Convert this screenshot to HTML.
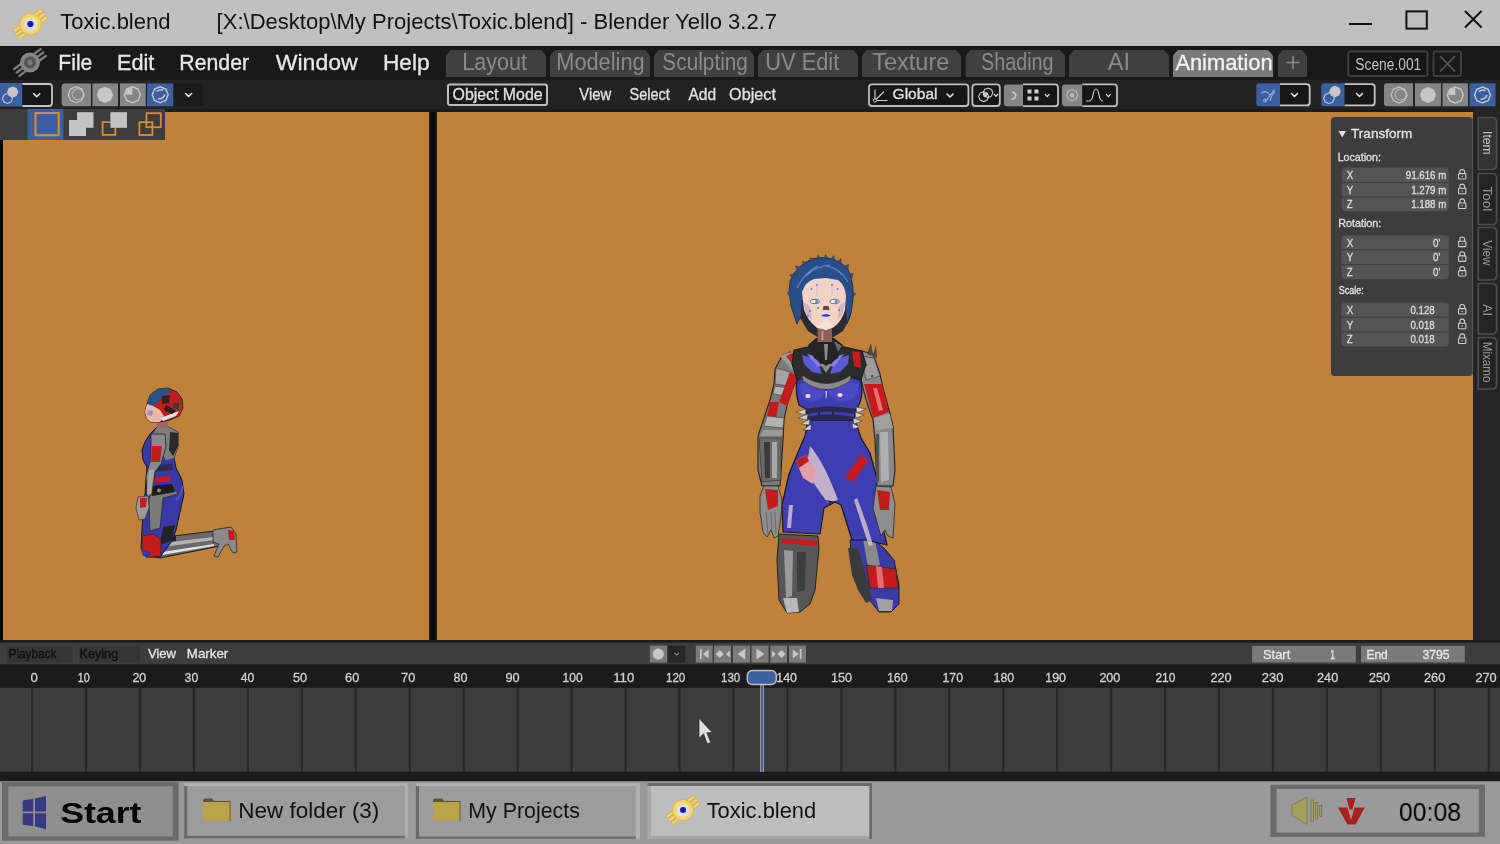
<!DOCTYPE html>
<html><head><meta charset="utf-8"><title>Toxic.blend - Blender</title>
<style>
html,body{margin:0;padding:0;width:1500px;height:844px;overflow:hidden;background:#1b1b1b;}
svg{display:block;position:absolute;left:0;top:0;will-change:transform;}
text{font-family:"Liberation Sans",sans-serif;}
</style></head><body>
<svg width="1500" height="844" viewBox="0 0 1500 844">
<defs>
 <g id="blogo">
  <g stroke="#c9a94a" stroke-width="3.4" stroke-linecap="round"><line x1="2.20" y1="-7.05" x2="10.59" y2="-13.36"/><line x1="4.79" y1="-3.61" x2="13.18" y2="-9.93"/><line x1="7.38" y1="-0.18" x2="15.77" y2="-6.50"/><line x1="-2.20" y1="7.05" x2="-10.59" y2="13.36"/><line x1="-4.79" y1="3.61" x2="-13.18" y2="9.93"/><line x1="-7.38" y1="0.18" x2="-15.77" y2="6.50"/></g>
  <g stroke="#fcd462" stroke-width="2.4" stroke-linecap="round"><line x1="2.20" y1="-7.05" x2="10.59" y2="-13.36"/><line x1="4.79" y1="-3.61" x2="13.18" y2="-9.93"/><line x1="7.38" y1="-0.18" x2="15.77" y2="-6.50"/><line x1="-2.20" y1="7.05" x2="-10.59" y2="13.36"/><line x1="-4.79" y1="3.61" x2="-13.18" y2="9.93"/><line x1="-7.38" y1="0.18" x2="-15.77" y2="6.50"/></g>
  <circle r="10.8" fill="#fcd462" stroke="#c9a94a" stroke-width="0.6"/>
  <circle r="7" fill="#dedede"/>
  <circle r="3.1" fill="#1a1ab8"/>
 </g>
 <g id="octo"><polygon points="8,0 5.66,5.66 0,8 -5.66,5.66 -8,0 -5.66,-5.66 0,-8 5.66,-5.66"/></g>
 <g id="chev"><polyline points="-3,-1.5 0,1.5 3,-1.5" fill="none" stroke="#e6e6e6" stroke-width="1.6" stroke-linecap="round" stroke-linejoin="round"/></g>
 <g id="lock"><rect x="-4.6" y="-1" width="9.2" height="6.8" rx="1" fill="none" stroke="#cfcfcf" stroke-width="1.4"/><path d="M-3,-1 V-3.2 A3,3 0 0 1 3,-3.2 V-1" fill="none" stroke="#cfcfcf" stroke-width="1.4"/><rect x="-0.8" y="1.8" width="1.6" height="1.4" fill="#cfcfcf"/></g>
</defs>

<!-- ============ TITLE BAR ============ -->
<rect x="0" y="0" width="1500" height="46" fill="#c0c0c0"/>
<use href="#blogo" x="30.4" y="24.1"/>
<rect x="1349" y="23" width="23" height="2" fill="#111"/>
<rect x="1406.4" y="11.4" width="20.4" height="17.2" fill="none" stroke="#111" stroke-width="2"/>
<path d="M1465 11 L1481.5 27.5 M1481.5 11 L1465 27.5" stroke="#111" stroke-width="2"/>

<!-- ============ MENU BAR ============ -->
<rect x="0" y="46" width="1500" height="34" fill="#191919"/>
<g transform="translate(30,62.5)">
  <g id="graylogo" stroke="#7c7c7c" stroke-width="2.4" stroke-linecap="round"><line x1="2.20" y1="-7.05" x2="10.59" y2="-13.36"/><line x1="4.79" y1="-3.61" x2="13.18" y2="-9.93"/><line x1="7.38" y1="-0.18" x2="15.77" y2="-6.50"/><line x1="-2.20" y1="7.05" x2="-10.59" y2="13.36"/><line x1="-4.79" y1="3.61" x2="-13.18" y2="9.93"/><line x1="-7.38" y1="0.18" x2="-15.77" y2="6.50"/></g>
  <circle r="10" fill="#858585"/><circle r="6" fill="#555"/><circle r="2.6" fill="#7a7a7a"/>
</g>
<!-- workspace tabs -->
<g fill="#404040">
 <path d="M446.0 77 V56.5 Q446.0 55 447.2 54 L450.0 51 Q451.0 50 452.5 50 H539.5 Q541.0 50 542.0 51 L544.8 54 Q546.0 55 546.0 56.5 V77 Z"/>
 <path d="M550.0 77 V56.5 Q550.0 55 551.2 54 L554.0 51 Q555.0 50 556.5 50 H643.5 Q645.0 50 646.0 51 L648.8 54 Q650.0 55 650.0 56.5 V77 Z"/>
 <path d="M654.0 77 V56.5 Q654.0 55 655.2 54 L658.0 51 Q659.0 50 660.5 50 H747.5 Q749.0 50 750.0 51 L752.8 54 Q754.0 55 754.0 56.5 V77 Z"/>
 <path d="M758.0 77 V56.5 Q758.0 55 759.2 54 L762.0 51 Q763.0 50 764.5 50 H851.5 Q853.0 50 854.0 51 L856.8 54 Q858.0 55 858.0 56.5 V77 Z"/>
 <path d="M862.0 77 V56.5 Q862.0 55 863.2 54 L866.0 51 Q867.0 50 868.5 50 H954.5 Q956.0 50 957.0 51 L959.8 54 Q961.0 55 961.0 56.5 V77 Z"/>
 <path d="M965.6 77 V56.5 Q965.6 55 966.8000000000001 54 L969.6 51 Q970.6 50 972.1 50 H1058.5 Q1060.0 50 1061.0 51 L1063.8 54 Q1065.0 55 1065.0 56.5 V77 Z"/>
 <path d="M1069.0 77 V56.5 Q1069.0 55 1070.2 54 L1073.0 51 Q1074.0 50 1075.5 50 H1162.5 Q1164.0 50 1165.0 51 L1167.8 54 Q1169.0 55 1169.0 56.5 V77 Z"/>
 <path d="M1278.0 77 V56.5 Q1278.0 55 1279.2 54 L1282.0 51 Q1283.0 50 1284.5 50 H1300.5 Q1302.0 50 1303.0 51 L1305.8 54 Q1307.0 55 1307.0 56.5 V77 Z"/>
</g>
<path d="M1173.0 77 V56.5 Q1173.0 55 1174.2 54 L1177.0 51 Q1178.0 50 1179.5 50 H1266.5 Q1268.0 50 1269.0 51 L1271.8 54 Q1273.0 55 1273.0 56.5 V77 Z" fill="#7a7a7a"/>
<path d="M1293 56 V69 M1286.5 62.5 H1299.5" stroke="#8a8a8a" stroke-width="1.6"/>
<rect x="1348.3" y="51.4" width="79.2" height="24.6" rx="2" fill="#161616" stroke="#3f3f3f" stroke-width="2"/>
<rect x="1433.6" y="51.4" width="27.4" height="24.6" rx="2" fill="#191919" stroke="#3f3f3f" stroke-width="2"/>
<path d="M1440 56 L1455 71.5 M1455 56 L1440 71.5" stroke="#5a5a5a" stroke-width="1.6"/>

<!-- ============ TOOLBAR ============ -->
<rect x="0" y="80" width="1500" height="29" fill="#232323"/>
<!-- overlay left -->
<rect x="0" y="83" width="22.4" height="23.5" fill="#3b5f9f"/>
<path d="M22.4 84 H49 Q52 84 52 87 V103 Q52 106 49 106 H22.4Z" fill="#171717"/><path d="M22.4 84 H49 Q52 84 52 87 V103 Q52 106 49 106 H22.4" fill="none" stroke="#c4c4c4" stroke-width="1.8"/>
<use href="#chev" x="36.7" y="95.3"/>
<g transform="translate(12.7,92) scale(0.7)" fill="#c8c8c8"><use href="#octo"/></g>
<g transform="translate(7.5,98.5) scale(0.62)" fill="none" stroke="#c0c0c0" stroke-width="1.8"><use href="#octo"/></g>
<!-- shading group left -->
<path d="M64.6 83.4 H91 V106.2 H64.6 Q61.6 106.2 61.6 103.2 V86.4 Q61.6 83.4 64.6 83.4Z" fill="#858585"/>
<rect x="92.4" y="83.4" width="25.6" height="22.8" fill="#858585"/>
<rect x="120" y="83.4" width="25.8" height="22.8" fill="#858585"/>
<rect x="147" y="83.4" width="26.2" height="22.8" fill="#3b5f9f"/>
<path d="M174.4 83.4 H200 Q203 83.4 203 86.4 V103.2 Q203 106.2 200 106.2 H174.4Z" fill="#1b1b1b"/>
<use href="#chev" x="188.6" y="95"/>
<g transform="translate(76.2,94.7)" fill="none" stroke="#c6c6c6" stroke-width="1.2"><use href="#octo"/><g transform="translate(1.6,-0.4) scale(0.72)"><use href="#octo"/></g></g>
<g transform="translate(105,94.8) scale(1.02)" fill="#c6c6c6"><use href="#octo"/></g>
<g transform="translate(132.4,94.8)"><g fill="none" stroke="#c6c6c6" stroke-width="1.4"><use href="#octo"/></g><path d="M0 0 V-7.4 L-5.2 -5.2 L-7.4 0 Z" fill="#c6c6c6"/></g>
<g transform="translate(160.2,94.8)"><g fill="none" stroke="#c6c6c6" stroke-width="1.4"><use href="#octo"/></g><path d="M-3.5 -3.5 Q0 -6 3 -4.5 M4.5 0 Q3 4.5 -2 4.2" fill="none" stroke="#c6c6c6" stroke-width="1.6"/></g>
<!-- header mode + menus -->
<rect x="448" y="84.5" width="99" height="20.5" rx="2" fill="#181818" stroke="#bdbdbd" stroke-width="2"/>
<!-- Global dropdown -->
<rect x="869" y="84.4" width="99.4" height="21.6" rx="3" fill="#161616" stroke="#bdbdbd" stroke-width="1.8"/>
<path d="M875 89.5 V100.5 H887.5 M875 100.5 L884 91.5" fill="none" stroke="#c8c8c8" stroke-width="1.2"/>
<circle cx="875" cy="100.5" r="1.6" fill="#161616" stroke="#c8c8c8" stroke-width="1"/>
<use href="#chev" x="950" y="95.5"/>
<rect x="972.4" y="84.4" width="27.4" height="21.6" rx="3" fill="#161616" stroke="#bdbdbd" stroke-width="1.8"/>
<g transform="translate(983.6,96.6) scale(0.62)" fill="none" stroke="#c8c8c8" stroke-width="1.8"><use href="#octo"/></g>
<g transform="translate(988,92.8) scale(0.6)" fill="none" stroke="#c8c8c8" stroke-width="1.8"><use href="#octo"/></g>
<circle cx="985.2" cy="94.8" r="2.4" fill="#c8c8c8"/>
<polyline points="994,94 996,96.4 998,94" fill="none" stroke="#e6e6e6" stroke-width="1.2"/>
<!-- snap -->
<path d="M1007 84.4 H1023 V106.2 H1007 Q1004 106.2 1004 103.2 V87.4 Q1004 84.4 1007 84.4Z" fill="#858585"/>
<path d="M1023 84.4 H1055 Q1058 84.4 1058 87.4 V103.2 Q1058 106.2 1055 106.2 H1023Z" fill="#161616"/><path d="M1023 84.4 H1055 Q1058 84.4 1058 87.4 V103.2 Q1058 106.2 1055 106.2 H1023" fill="none" stroke="#bdbdbd" stroke-width="1.8"/>
<path d="M1012 92 Q1017 93.5 1015.4 97 Q1014 99.5 1011.5 99" fill="none" stroke="#c8c8c8" stroke-width="1.6"/>
<g fill="#cfcfcf"><rect x="1027.5" y="89.5" width="4" height="4"/><rect x="1034.5" y="89.5" width="4" height="4"/><rect x="1027.5" y="96.5" width="4" height="4"/><rect x="1034.5" y="96.5" width="4" height="4"/></g>
<polyline points="1045,94.2 1047.2,96.6 1049.4,94.2" fill="none" stroke="#e6e6e6" stroke-width="1.2"/>
<!-- proportional -->
<path d="M1065 84.4 H1082.3 V106.2 H1065 Q1062 106.2 1062 103.2 V87.4 Q1062 84.4 1065 84.4Z" fill="#858585"/>
<path d="M1082.3 84.4 H1114 Q1117 84.4 1117 87.4 V103.2 Q1117 106.2 1114 106.2 H1082.3Z" fill="#161616"/><path d="M1082.3 84.4 H1114 Q1117 84.4 1117 87.4 V103.2 Q1117 106.2 1114 106.2 H1082.3" fill="none" stroke="#bdbdbd" stroke-width="1.8"/>
<g transform="translate(1072.2,95.2) scale(0.7)" fill="none" stroke="#bdbdbd" stroke-width="1.6"><use href="#octo"/></g>
<circle cx="1072.2" cy="95.2" r="2.2" fill="#bdbdbd"/>
<path d="M1086 101 H1089 Q1092 101 1093 95 Q1094 89 1096 89 Q1098 89 1099 95 Q1100 101 1103 101" fill="none" stroke="#c8c8c8" stroke-width="1.2"/>
<polyline points="1106.2,94.2 1108.4,96.6 1110.6,94.2" fill="none" stroke="#e6e6e6" stroke-width="1.2"/>
<!-- right toolbar: gizmo -->
<path d="M1259.3 83.3 H1280 V106.3 H1259.3 Q1256.3 106.3 1256.3 103.3 V86.3 Q1256.3 83.3 1259.3 83.3Z" fill="#3b5f9f"/>
<path d="M1280 84.2 H1306.7 Q1309.7 84.2 1309.7 87.2 V102.4 Q1309.7 105.4 1306.7 105.4 H1280Z" fill="#171717"/><path d="M1280 84.2 H1306.7 Q1309.7 84.2 1309.7 87.2 V102.4 Q1309.7 105.4 1306.7 105.4 H1280" fill="none" stroke="#c4c4c4" stroke-width="1.8"/>
<use href="#chev" x="1294.5" y="95"/>
<path d="M1261.5 93 Q1266 89.5 1270 95 M1274.4 89.5 L1268 98 Q1266.5 100.5 1265 101 M1275 91.5 Q1271 95 1270 101" fill="none" stroke="#9fb3d8" stroke-width="1.1"/>
<circle cx="1265" cy="100.5" r="1.5" fill="none" stroke="#9fb3d8" stroke-width="1"/>
<!-- overlays right -->
<path d="M1324.3 83.3 H1344.7 V106.3 H1324.3 Q1321.3 106.3 1321.3 103.3 V86.3 Q1321.3 83.3 1324.3 83.3Z" fill="#3b5f9f"/>
<path d="M1344.7 84.2 H1371.7 Q1374.7 84.2 1374.7 87.2 V102.4 Q1374.7 105.4 1371.7 105.4 H1344.7Z" fill="#171717"/><path d="M1344.7 84.2 H1371.7 Q1374.7 84.2 1374.7 87.2 V102.4 Q1374.7 105.4 1371.7 105.4 H1344.7" fill="none" stroke="#c4c4c4" stroke-width="1.8"/>
<use href="#chev" x="1359.5" y="95"/>
<g transform="translate(1335,91.5) scale(0.72)" fill="#c8c8c8"><use href="#octo"/></g>
<g transform="translate(1329,98.2) scale(0.66)" fill="none" stroke="#c0c0c0" stroke-width="1.8"><use href="#octo"/></g>
<!-- shading right -->
<path d="M1387 83.3 H1413 V106.3 H1387 Q1384 106.3 1384 103.3 V86.3 Q1384 83.3 1387 83.3Z" fill="#858585"/>
<rect x="1415" y="83.3" width="26" height="23" fill="#858585"/>
<rect x="1442.5" y="83.3" width="25.5" height="23" fill="#858585"/>
<rect x="1469.5" y="83.3" width="26" height="23" fill="#3b5f9f"/>
<g transform="translate(1399,95)" fill="none" stroke="#c6c6c6" stroke-width="1.2"><use href="#octo"/><g transform="translate(1.6,-0.4) scale(0.72)"><use href="#octo"/></g></g>
<g transform="translate(1428,95)" fill="#c6c6c6"><use href="#octo"/></g>
<g transform="translate(1455.3,95)"><g fill="none" stroke="#c6c6c6" stroke-width="1.4"><use href="#octo"/></g><path d="M0 0 V-7.4 L-5.2 -5.2 L-7.4 0 Z" fill="#c6c6c6"/></g>
<g transform="translate(1482.5,95)"><g fill="none" stroke="#c6c6c6" stroke-width="1.4"><use href="#octo"/></g><path d="M-3.5 -3.5 Q0 -6 3 -4.5 M4.5 0 Q3 4.5 -2 4.2" fill="none" stroke="#c6c6c6" stroke-width="1.6"/></g>

<!-- ============ VIEWPORTS ============ -->
<rect x="0" y="109" width="1500" height="533" fill="#1c1c1c"/>
<rect x="0" y="112" width="3" height="528" fill="#000"/>
<rect x="3" y="112" width="426.2" height="528" fill="#be823a"/>
<rect x="429" y="112" width="8" height="528" fill="#202123"/>
<rect x="430.5" y="112" width="5" height="528" fill="#000"/>
<rect x="437" y="112" width="1036" height="528" fill="#be823a"/>
<!-- select mode strip -->
<rect x="0" y="109" width="165" height="31" fill="#3d3d3d"/>
<rect x="27.5" y="109" width="36" height="31" fill="#3b5f9f"/>
<rect x="35.5" y="113" width="23.2" height="22.2" fill="#3b5f9f" stroke="#d98c36" stroke-width="2"/>
<g fill="#c4c4c4"><rect x="77" y="112.2" width="16.5" height="15.6"/><rect x="69" y="120" width="17" height="16"/></g>
<rect x="110.4" y="112.2" width="16.6" height="15.6" fill="#c4c4c4"/>
<path d="M110.4 122.2 H102.6 V134.8 H115.4 V127.8" fill="none" stroke="#d98c36" stroke-width="1.8"/>
<rect x="146.4" y="113.2" width="14.4" height="14" fill="none" stroke="#d98c36" stroke-width="1.8"/>
<rect x="139.4" y="122.2" width="13" height="12.8" fill="none" stroke="#d98c36" stroke-width="1.8"/>

<!-- ===== big figure ===== -->
<g id="bigfig" stroke-linejoin="round">
 <!-- right leg (viewer right) lower, behind -->
 <path d="M850 540 L868 536 L884 548 L894 560 L899 585 L899 604 L891 612 L879 612 L868 598 L858 583 L852 566 Z" fill="#3a3aa8" stroke="#1c1c30" stroke-width="1"/>
 <path d="M848 548 L858 548 L866 575 L872 600 L866 603 L858 590 L852 575 Z" fill="#3a3a3a"/>
 <path d="M863 538 L875 540 L880 565 L868 568 Z" fill="#8a8a8a"/>
 <path d="M866 565 L896 569 L898 588 L870 588 Z" fill="#c41c1c" stroke="#2a2a2a" stroke-width="0.8"/>
 <path d="M876 566 L882 567 L884 588 L878 588 Z" fill="#e07070"/>
 <path d="M876 598 L893 600 L892 611 L879 611 Z" fill="#a0a0a0"/>
 <!-- left boot -->
 <path d="M779 534 L818 536 L819 548 L815 590 L810 604 L800 612 L787 613 L779 600 L777 560 Z" fill="#575757" stroke="#222" stroke-width="1"/>
 <path d="M781 538 L817 541 L817 546 L781 543 Z" fill="#c41c1c"/>
 <path d="M784 550 L793 551 L792 596 L786 598 Z" fill="#9a9a9a"/>
 <path d="M797 552 L806 552 L805 590 L797 592 Z" fill="#3e3e3e"/>
 <path d="M783 598 L797 598 L799 612 L787 613 Z" fill="#b8b8b8"/>
 <!-- thighs / hips -->
 <path d="M808 420 L855 420 L861 438 L870 453 L879 486 L881 520 L887 545 L866 540 L852 540 L841 505 L835 502 L824 508 L820 534 L783 532 L782 505 L789 474 L799 450 L805 436 Z" fill="#3e3eb0" stroke="#15152a" stroke-width="1.2"/>
 <path d="M810 446 Q824 462 838 500 L828 503 Q816 488 806 470 Z" fill="#d8c4d4" opacity="0.85"/>
 <path d="M796 461 L806 455 L816 470 L813 484 L803 478 Z" fill="#e0a0a8"/>
 <path d="M796 461 L806 455 L809 461 L799 468 Z" fill="#c41c1c"/>
 <path d="M845 477 L861 455 L869 460 L853 482 Z" fill="#c41c1c"/>
 <path d="M857 498 Q866 520 873 545 L869 546 Q861 522 854 500 Z" fill="#d8c8d0" opacity="0.8"/>
 <path d="M789 505 L793 505 L791 528 L787 528 Z" fill="#d8c8d0" opacity="0.8"/>
 <path d="M826 500 L836 502 L830 504 Z" fill="#2a2a5a"/>
 <!-- left arm (viewer left) -->
 <path d="M790 352 L782 356 L775 369 L774 384 L770 400 L766 412 L762 424 L758 436 L758 470 L762 486 L780 486 L783 440 L784 420 L787 405 L793 388 L799 376 Z" fill="#7a7a7a" stroke="#222" stroke-width="1.1"/>
 <path d="M776 368 L790 372 L789 386 L775 384 Z" fill="#a4a4a4" stroke="#3a3a3a" stroke-width="0.6"/>
 <path d="M775 386 L789 388 L786 396 L773 394 Z" fill="#b0b0b0" stroke="#3a3a3a" stroke-width="0.6"/>
 <path d="M790 372 L798 376 L787 406 L779 402 Z" fill="#c41c1c"/>
 <path d="M780 356 L790 352 L799 364 L792 370 Z" fill="#9a9a9a"/>
 <path d="M786 356 L793 353 L801 366 L796 369 Z" fill="#c41c1c"/>
 <path d="M770 402 L779 402 L776 418 L767 416 Z" fill="#c41c1c"/>
 <path d="M767 416 L784 418 L783 428 L764 426 Z" fill="#b4b4b4" stroke="#3a3a3a" stroke-width="0.6"/>
 <path d="M763 430 L783 430 L782 436 L761 436 Z" fill="#9a9a9a"/>
 <path d="M759 438 L781 438 L781 480 L762 482 Z" fill="#6a6a6a" stroke="#2a2a2a" stroke-width="0.6"/>
 <path d="M764 442 L770 442 L770 478 L765 478 Z" fill="#3a3a3a"/>
 <path d="M772 442 L777 442 L777 478 L772 478 Z" fill="#a8a8a8"/>
 <!-- left hand -->
 <path d="M764 486 L778 486 L782 500 L781 516 L778 536 L774 538 L771 530 L767 537 L763 532 L760 512 L760 496 Z" fill="#8e8e8e" stroke="#2a2a2a" stroke-width="0.8"/>
 <path d="M765 489 L778 490 L778 506 L768 510 Z" fill="#c41c1c"/>
 <path d="M766 512 L768 534 M771 512 L772 532 M775 512 L776 534" stroke="#5a5a5a" stroke-width="0.7"/>
 <!-- right arm -->
 <path d="M862 351 L873 354 L880 374 L883 388 L889 410 L893 426 L895 470 L893 486 L877 486 L875 440 L873 420 L868 406 L864 392 L861 379 Z" fill="#8a8a8a" stroke="#222" stroke-width="1.1"/>
 <path d="M861 356 L874 358 L880 376 L866 380 Z" fill="#9c9c9c" stroke="#3a3a3a" stroke-width="0.6"/>
 <circle cx="866" cy="365" r="1" fill="#333"/><circle cx="872" cy="376" r="1" fill="#333"/>
 <path d="M864 384 L882 384 L889 412 L873 418 Z" fill="#c41c1c"/>
 <path d="M873 388 L877 388 L883 410 L879 411 Z" fill="#ea7070"/>
 <path d="M874 418 L890 414 L893 428 L876 430 Z" fill="#a0a0a0"/>
 <path d="M880 432 L888 432 L889 480 L881 482 Z" fill="#b0b0b0"/>
 <path d="M876 434 L879 434 L879 482 L876 482 Z" fill="#505050"/>
 <path d="M867 354 L871 343 L873 355 L876 345 L877 358 Z" fill="#4a4a4a"/>
 <!-- right hand -->
 <path d="M876 486 L891 487 L895 504 L894 520 L893 538 L888 536 L885 530 L881 536 L878 526 L873 508 Z" fill="#8e8e8e" stroke="#2a2a2a" stroke-width="0.8"/>
 <path d="M877 490 L890 492 L889 510 L880 510 Z" fill="#c41c1c"/>
 <!-- torso -->
 <path d="M797 381 Q800 377 812 377 Q822 378 826 386 Q830 378 840 377 Q858 377 861 382 Q864 396 858 407 L856 409 L854 420 L808 420 L806 409 L799 405 Q795 392 797 381 Z" fill="#3e3eb4" stroke="#181830" stroke-width="1.2"/>
 <path d="M800 384 Q812 379 824 388 Q826 398 812 402 Q800 400 800 384 Z" fill="#5050c8" opacity="0.7"/>
 <path d="M828 388 Q840 379 858 384 Q860 400 842 402 Q828 398 828 388 Z" fill="#5050c8" opacity="0.7"/>
 <ellipse cx="808" cy="396" rx="2.6" ry="2" fill="#f0d8d0"/>
 <ellipse cx="840" cy="395" rx="2.6" ry="2" fill="#f0d8d0"/>
 <path d="M825.5 391 L827 391 L826.6 398 L825.8 398 Z" fill="#e8d0d0"/>
 <path d="M806 409 Q826 404 856 409 L855 414 Q826 409 807 414 Z" fill="#2a2a48"/>
 <path d="M807 417 Q826 412 855 417 L854 420 L808 420 Z" fill="#2a2a48"/>
 <path d="M818 411 L820 411 L820 418 L818 418 Z M832 410 L834 410 L834 417 L832 417 Z" fill="#2a2a48"/>
 <g fill="#d0d0d0" stroke="#2a2a2a" stroke-width="0.5">
  <path d="M796 412 L806 409 L805 415 Z"/><path d="M798 418 L808 414 L807 420 Z"/><path d="M801 424 L810 419 L809 425 Z"/><path d="M803 430 L811 424 L811 430 Z"/>
  <path d="M866 409 L856 407 L857 413 Z"/><path d="M864 415 L855 412 L856 418 Z"/><path d="M862 421 L853 418 L854 424 Z"/><path d="M860 427 L852 423 L853 429 Z"/>
 </g>
 <!-- shoulder yoke -->
 <path d="M794 350 L812 346 L826 350 L840 346 L862 351 L866 364 L861 380 L850 376 L826 388 L802 376 L797 380 L792 364 Z" fill="#2c2c2c" stroke="#1a1a1a" stroke-width="1"/>
 <path d="M802 355 L812 358 L820 368 L822 374 L812 372 L804 364 Z" fill="#5a5ad6"/>
 <path d="M807 354 L814 356 L822 366 L818 367 Z" fill="#8080e8"/>
 <path d="M849 355 L839 358 L832 368 L830 374 L840 372 L848 364 Z" fill="#5a5ad6"/>
 <path d="M844 354 L837 356 L830 366 L834 367 Z" fill="#8080e8"/>
 <path d="M852 351 L860 352 L861 368 L854 366 Z" fill="#c41c1c"/>
 <path d="M802 375 Q826 392 851 375 L850 381 Q826 398 803 381 Z" fill="#8a8a8a" stroke="#2a2a2a" stroke-width="0.6"/>
 <path d="M820 364 L832 364 L826 373 Z" fill="#8a8a8a"/>
 <!-- neck & collar -->
 <path d="M808 345 L816 338 L834 338 L843 345 L838 358 L826 366 L814 358 Z" fill="#242424"/>
 <path d="M824 344 L828 344 L827 360 L825 360 Z" fill="#8a8a8a"/>
 <path d="M834 341 L842 346 L838 352 Z" fill="#6a6a6a"/>
 <!-- jaw shadow -->
 <path d="M796 300 L853 300 L850 318 L843 331 L832 338 L819 338 L808 331 L800 318 Z" fill="#2a2a32"/>
 <rect x="817.5" y="327" width="14.5" height="15" fill="#8c6058"/>
 <rect x="821.5" y="331" width="1.8" height="9" fill="#c09a90"/>
 <!-- hair -->
 <path d="M797 324 L791 306 L789 292 L790 281 L795 272 L801 266 L806 262 L812 259 L818 257.5 L824 257.5 L830 258.5 L836 260.5 L842 264 L848 269 L851 277 L853 287 L853 300 L851 313 L847 324 L845 300 L843 288 L838 281 L826 278 L812 280 L805 287 L802 300 L801 316 Z" fill="#2a4e8a" stroke="#1c2c4a" stroke-width="0.8"/>
 <g fill="#2f5a9c" stroke="#1c2c4a" stroke-width="0.4">
  <path d="M792.0 278.0 L789.6 274.8 L795.0 274.0 Z"/><path d="M797.0 270.0 L795.4 265.8 L801.0 267.0 Z"/><path d="M803.0 265.0 L802.6 261.0 L807.0 263.0 Z"/><path d="M810.0 261.0 L810.2 257.2 L814.0 260.0 Z"/><path d="M817.0 259.0 L817.8 255.2 L821.0 258.0 Z"/><path d="M824.0 258.0 L825.4 254.4 L828.0 258.0 Z"/><path d="M831.0 259.0 L833.6 255.6 L835.0 260.0 Z"/><path d="M838.0 261.0 L841.0 258.4 L841.0 263.0 Z"/><path d="M845.0 266.0 L848.6 264.2 L848.0 269.0 Z"/><path d="M850.0 274.0 L853.4 273.6 L852.0 278.0 Z"/><path d="M790.0 292.0 L787.0 293.0 L790.0 297.0 Z"/><path d="M853.0 292.0 L856.0 293.6 L853.0 297.0 Z"/>
 </g>
 <path d="M797 288 Q805 272 818 266 M806 276 Q816 266 830 265 M826 266 Q840 268 848 282" fill="none" stroke="#5a8cd0" stroke-width="1.1"/>
 <!-- face -->
 <path d="M802 292 Q805 282 814 279 L826 278 L838 280 Q845 285 846 296 L845 310 Q842 321 834 327 L826 330 L817 328 Q808 321 804 310 Z" fill="#f2d4c6"/>
 <path d="M803 302 L810 306 L812 320 L806 314 Z" fill="#b8a0c0" opacity="0.6"/>
 <path d="M845 302 L839 306 L838 320 L843 313 Z" fill="#b8a0c0" opacity="0.6"/>
 <path d="M826 318 L834 327 L826 330 L818 327 Z" fill="#fae6dc" opacity="0.7"/>
 <ellipse cx="814.8" cy="301.5" rx="4.6" ry="2.1" fill="#eef2fa" stroke="#4a3030" stroke-width="0.7"/>
 <ellipse cx="834.6" cy="301.5" rx="4.6" ry="2.1" fill="#eef2fa" stroke="#4a3030" stroke-width="0.7"/>
 <circle cx="816.6" cy="301.5" r="1.6" fill="#5a8ad8"/><circle cx="836.2" cy="301.5" r="1.6" fill="#5a8ad8"/>
 <path d="M823.5 306 L828.5 306 L829.5 310 L822.5 310 Z" fill="#6a4848"/>
 <path d="M821 315.5 Q826 312.5 831 315.5 Q826 318 821 315.5 Z" fill="#2244e8"/>
 <g fill="#6a6ae6"><circle cx="817" cy="285" r="1"/><circle cx="832" cy="285" r="1"/><circle cx="811.5" cy="289" r="1"/><circle cx="837.5" cy="289" r="1"/><circle cx="810" cy="311" r="1"/><circle cx="839" cy="310" r="1"/><circle cx="818" cy="308" r="1"/><circle cx="808" cy="316" r="0.9"/></g>
 <path d="M817 283 V296 M832 283 V296" stroke="#b0a0b8" stroke-width="0.5"/>
</g>

<!-- ===== small figure ===== -->
<g id="smallfig" stroke-linejoin="round">
 <!-- lower leg along ground -->
 <path d="M156 538 L215 531 L222 535 L220 546 L160 558 L150 556 Z" fill="#6a6a6a" stroke="#1e1e1e" stroke-width="1"/>
 <path d="M162 543 L214 537 L214 540 L162 547 Z" fill="#b4b4b4"/>
 <path d="M162 552 L214 544 L214 546 L162 555 Z" fill="#e0e0e0"/>
 <path d="M162 538 L176 536 L176 541 L162 543 Z" fill="#242424"/>
 <!-- foot -->
 <path d="M213 530 L231 527 L236 534 L237 552 L233 553 L228 544 L224 546 L218 557 L214 556 L219 544 L213 542 Z" fill="#8a8a8a" stroke="#2a2a2a" stroke-width="0.8"/>
 <path d="M228 530 L234 531 L235 540 L229 540 Z" fill="#c41c1c"/>
 <!-- body silhouette -->
 <path d="M157 427 L150 434 L145 442 L142 450 L143 460 L147 467 L146 480 L145 494 L143 510 L142 530 L141 548 L146 557 L160 557 L172 541 L176 530 L180 512 L184 494 L182 480 L176 468 L174 458 L178 446 L178 432 L168 427 Z" fill="#3838a6" stroke="#141428" stroke-width="1"/>
 <path d="M157 427 L168 427 L178 432 L178 446 L174 458 L166 460 L160 450 L150 440 Z" fill="#7e7e7e"/>
 <path d="M170 432 L178 433 L178 446 L173 456 L169 450 Z" fill="#2a2a2a"/>
 <path d="M150 466 L172 464 L173 470 L152 472 Z" fill="#2a2a4a"/>
 <path d="M151 478 L170 476 L171 481 L152 483 Z" fill="#c41c1c"/>
 <path d="M152 489 L172 486 L178 494 L163 498 L160 528 L150 531 L149 500 Z" fill="#7a7a7a" stroke="#222" stroke-width="0.6"/>
 <path d="M150 486 L172 484 L175 492 L152 496 Z" fill="#1c1c1c"/>
 <circle cx="159" cy="490.5" r="2" fill="#8a8a8a"/>
 <path d="M163 527 L175 525 L172 540 L160 545 Z" fill="#222"/>
 <path d="M176 500 Q182 494 183 486" fill="none" stroke="#5a5ac8" stroke-width="1.5"/>
 <!-- knee pad -->
 <path d="M142 536 L154 534 L161 540 L161 556 L150 557 L142 550 Z" fill="#c41c1c" stroke="#2a2a2a" stroke-width="0.8"/>
 <path d="M141 550 L150 552 L150 557 L143 556 Z" fill="#3838a6"/>
 <!-- arm -->
 <path d="M151 434 L165 434 L166 446 L161 464 L155 472 L152 494 L147 498 L146 476 L150 462 L151 446 Z" fill="#8a8a8a" stroke="#222" stroke-width="0.8"/>
 <path d="M152 446 L162 446 L160 462 L151 462 Z" fill="#c41c1c"/>
 <path d="M149 470 L154 470 L151 494 L147 494 Z" fill="#a8a8a8"/>
 <path d="M138 497 L148 496 L149 508 L145 519 L139 520 L136 508 Z" fill="#9a9a9a" stroke="#2a2a2a" stroke-width="0.6"/>
 <path d="M140 498 L147 498 L146 507 L140 508 Z" fill="#c41c1c"/>
 <!-- neck -->
 <path d="M157 418 L168 418 L168 428 L157 428 Z" fill="#a0665e"/>
 <!-- head -->
 <path d="M147 404 L150 395 L158 389 L168 388 L177 392 L182 399 L183 408 L179 416 L170 420 L160 422 L151 422 L147 419 L145 412 Z" fill="#c41c1c" stroke="#262626" stroke-width="0.9"/>
 <path d="M147 404 L150 395 L158 389 L168 388 L172 391 L164 396 L158 402 L153 408 Z" fill="#2a5088"/>
 <path d="M145 412 L147 404 L153 406 L160 410 L164 416 L160 422 L151 422 L147 419 Z" fill="#e8baa8"/>
 <path d="M148 410 L153 411 L152 416 L147 415 Z" fill="#9a80c0" opacity="0.8"/>
 <path d="M162 396 L170 395 L169 403 L162 404 Z" fill="#3a1a1a"/>
 <path d="M173 403 L179 403 L179 409 L173 409 Z" fill="#3a3a3a"/>
 <path d="M160 418 L179 411 L176 416 L163 421 Z" fill="#e0e0e0"/>
 <path d="M166 405 L176 411 L172 414 L164 410 Z" fill="#1e1e1e"/>
</g>


<!-- N panel -->
<path d="M1335 117 H1469 Q1473 117 1473 121 V372 Q1473 376 1469 376 H1335 Q1331 376 1331 372 V121 Q1331 117 1335 117Z" fill="#3d3d3d"/>
<path d="M1469 117.5 Q1472.5 117.5 1472.5 121 V372 Q1472.5 375.5 1469 375.5" fill="none" stroke="#575757" stroke-width="1"/>
<polygon points="1338.5,131 1346,131 1342.25,137.5" fill="#e0e0e0"/>
<g fill="#545454">
 <rect x="1341.8" y="167.6" width="107" height="43.6" rx="4"/>
 <rect x="1341.5" y="235.2" width="107.3" height="43.7" rx="4"/>
 <rect x="1341.5" y="302.6" width="107.3" height="43.9" rx="4"/>
</g>
<g fill="#3d3d3d">
 <rect x="1341.5" y="182" width="107.5" height="1"/><rect x="1341.5" y="196.6" width="107.5" height="1"/>
 <rect x="1341.5" y="249.3" width="107.5" height="1"/><rect x="1341.5" y="264" width="107.5" height="1"/>
 <rect x="1341.5" y="316.7" width="107.5" height="1"/><rect x="1341.5" y="331.5" width="107.5" height="1"/>
</g>
<g>
 <use href="#lock" transform="translate(1462.2,174.4) scale(0.8)"/><use href="#lock" transform="translate(1462.2,189.1) scale(0.8)"/><use href="#lock" transform="translate(1462.2,203.8) scale(0.8)"/>
 <use href="#lock" transform="translate(1462.2,242.0) scale(0.8)"/><use href="#lock" transform="translate(1462.2,256.7) scale(0.8)"/><use href="#lock" transform="translate(1462.2,271.4) scale(0.8)"/>
 <use href="#lock" transform="translate(1462.2,309.4) scale(0.8)"/><use href="#lock" transform="translate(1462.2,324.09999999999997) scale(0.8)"/><use href="#lock" transform="translate(1462.2,338.79999999999995) scale(0.8)"/>
</g>
<!-- right tab strip -->
<rect x="1473" y="109" width="27" height="533" fill="#252525"/>
<g fill="#242424" stroke="#4e4e4e" stroke-width="1.6">
 <path d="M1478.3 117.5 H1492 Q1496.5 117.5 1496.5 122 V165 Q1496.5 169.5 1492 169.5 H1478.3Z" fill="#333"/>
 <path d="M1478.3 173.5 H1492 Q1496.5 173.5 1496.5 178 V220 Q1496.5 224.5 1492 224.5 H1478.3Z"/>
 <path d="M1478.3 227.5 H1492 Q1496.5 227.5 1496.5 232 V275.5 Q1496.5 280 1492 280 H1478.3Z"/>
 <path d="M1478.3 283.5 H1492 Q1496.5 283.5 1496.5 288 V329.5 Q1496.5 334 1492 334 H1478.3Z"/>
 <path d="M1478.3 337.5 H1492 Q1496.5 337.5 1496.5 342 V384.5 Q1496.5 389 1492 389 H1478.3Z"/>
</g>

<!-- ============ TIMELINE ============ -->
<rect x="0" y="640" width="1500" height="2.6" fill="#1c1c1c"/>
<rect x="0" y="642.6" width="1500" height="22" fill="#3d3d3d"/>
<rect x="6.5" y="646" width="66" height="16.5" fill="#363636"/>
<rect x="79" y="646" width="61" height="16.5" fill="#363636"/>
<rect x="649.8" y="645.6" width="17.2" height="17" fill="#7a7a7a"/>
<circle cx="658.3" cy="654.1" r="5.6" fill="#c8c8c8"/>
<rect x="668.2" y="645.6" width="17.1" height="17" fill="#272727"/>
<polyline points="674.5,653 676.7,655.2 678.9,653" fill="none" stroke="#b8b8b8" stroke-width="1"/>
<g fill="#7a7a7a">
 <rect x="695.8" y="645.6" width="16.8" height="17"/><rect x="714" y="645.6" width="17" height="17"/>
 <rect x="733" y="645.6" width="17" height="17"/><rect x="751.5" y="645.6" width="17" height="17"/>
 <rect x="770.4" y="645.6" width="16.6" height="17"/><rect x="789" y="645.6" width="17" height="17"/>
</g>
<g fill="#c8c8c8">
 <rect x="700" y="649" width="1.6" height="10"/><polygon points="708.6,649.4 708.6,658.6 702.8,654"/>
 <polygon points="715.6,654 719.8,650 724,654 719.8,658"/><polygon points="729.8,650.5 729.8,657.5 725.8,654"/>
 <polygon points="745.2,648.5 745.2,659.5 737.5,654"/>
 <polygon points="756.5,648.5 756.5,659.5 764.2,654"/>
 <polygon points="771.8,650.5 771.8,657.5 775.8,654"/><polygon points="777.4,654 781.6,650 785.8,654 781.6,658"/>
 <polygon points="792.8,649.4 792.8,658.6 798.6,654"/><rect x="799.8" y="649" width="1.6" height="10"/>
</g>
<rect x="1252.1" y="645.8" width="103.7" height="16.7" fill="#7a7a7a"/>
<rect x="1361" y="645.8" width="103.8" height="16.7" fill="#7a7a7a"/>
<!-- ruler + body -->
<rect x="0" y="664.6" width="1500" height="23.2" fill="#1b1b1b"/>
<rect x="0" y="687.8" width="1500" height="84" fill="#3d3d3d"/>
<g fill="#282828" id="tlines"><rect x="31.00" y="687.8" width="2.2" height="84"/><rect x="84.95" y="687.8" width="2.2" height="84"/><rect x="138.90" y="687.8" width="2.2" height="84"/><rect x="192.85" y="687.8" width="2.2" height="84"/><rect x="246.80" y="687.8" width="2.2" height="84"/><rect x="300.75" y="687.8" width="2.2" height="84"/><rect x="354.70" y="687.8" width="2.2" height="84"/><rect x="408.65" y="687.8" width="2.2" height="84"/><rect x="462.60" y="687.8" width="2.2" height="84"/><rect x="516.55" y="687.8" width="2.2" height="84"/><rect x="570.50" y="687.8" width="2.2" height="84"/><rect x="624.45" y="687.8" width="2.2" height="84"/><rect x="678.40" y="687.8" width="2.2" height="84"/><rect x="732.35" y="687.8" width="2.2" height="84"/><rect x="786.30" y="687.8" width="2.2" height="84"/><rect x="840.25" y="687.8" width="2.2" height="84"/><rect x="894.20" y="687.8" width="2.2" height="84"/><rect x="948.15" y="687.8" width="2.2" height="84"/><rect x="1002.10" y="687.8" width="2.2" height="84"/><rect x="1056.05" y="687.8" width="2.2" height="84"/><rect x="1110.00" y="687.8" width="2.2" height="84"/><rect x="1163.95" y="687.8" width="2.2" height="84"/><rect x="1217.90" y="687.8" width="2.2" height="84"/><rect x="1271.85" y="687.8" width="2.2" height="84"/><rect x="1325.80" y="687.8" width="2.2" height="84"/><rect x="1379.75" y="687.8" width="2.2" height="84"/><rect x="1433.70" y="687.8" width="2.2" height="84"/><rect x="1487.65" y="687.8" width="2.2" height="84"/></g>
<rect x="0" y="771.8" width="1500" height="9.4" fill="#1b1b1b"/>
<!-- playhead -->
<rect x="760.3" y="683" width="3.6" height="89" fill="#bdbdbd"/>
<rect x="761" y="683" width="2.2" height="89" fill="#3b5f9f"/>
<rect x="747.3" y="670.5" width="29" height="14" rx="5" fill="#3b5f9f" stroke="#bdbdbd" stroke-width="1.5"/>
<!-- mouse cursor -->
<path d="M699 718.3 L699 738.4 L703.5 733.8 L707.3 743.8 L710.8 742.4 L706.8 732.8 L712.2 732.6 Z" fill="#dedede" stroke="#2a2a2a" stroke-width="0.7" stroke-linejoin="round"/>

<!-- ============ TASKBAR ============ -->
<rect x="0" y="781.2" width="1500" height="62.8" fill="#9a9a9a"/>
<rect x="2" y="782" width="176.7" height="58.7" fill="#6b6b6b"/>
<rect x="8.3" y="786.3" width="164.4" height="50.1" fill="#8f8f8f"/>
<g fill="#383884">
 <polygon points="22.7,800.5 33.2,798.8 33.2,811.5 22.7,811.5"/>
 <polygon points="35,798.5 46,796 46,811.5 35,811.5"/>
 <polygon points="22.7,813.2 33.2,813.2 33.2,826.2 22.7,824.6"/>
 <polygon points="35,813.2 46,813.2 46,829.3 35,826.5"/>
</g>
<!-- button 2 -->
<rect x="184.2" y="783" width="224" height="55.3" fill="#b0b0b0"/>
<rect x="184.2" y="786" width="3.3" height="52.3" fill="#6a6a6a"/>
<rect x="184.2" y="835.5" width="221" height="2.8" fill="#6a6a6a"/>
<rect x="187.5" y="786" width="217.5" height="49.5" fill="#9c9c9c"/>
<!-- button 3 -->
<rect x="415.8" y="783" width="224.2" height="55.8" fill="#b0b0b0"/>
<rect x="415.8" y="786" width="3.4" height="52.8" fill="#6a6a6a"/>
<rect x="415.8" y="836.3" width="220" height="2.5" fill="#6a6a6a"/>
<rect x="419.2" y="786" width="216.6" height="50.3" fill="#9c9c9c"/>
<!-- button 4 (active) -->
<rect x="647.5" y="783" width="224.5" height="56" fill="#a8a8a8"/>
<rect x="647.5" y="783" width="224.5" height="3" fill="#6a6a6a"/>
<rect x="869.2" y="783" width="2.8" height="56" fill="#6a6a6a"/>
<rect x="651" y="786" width="218.2" height="50" fill="#bdbdbd"/>
<!-- folder icons -->
<g transform="translate(203,798)">
 <path d="M0 3 Q0 0.5 2.5 0.5 H9 L11 3 H27.8 V23 H0Z" fill="#5e5230"/>
 <rect x="0" y="4" width="27.8" height="19" fill="#b8a24a"/>
 <rect x="26.2" y="4" width="1.6" height="19" fill="#8a7838"/>
</g>
<g transform="translate(433,798)">
 <path d="M0 3 Q0 0.5 2.5 0.5 H9 L11 3 H27.8 V23 H0Z" fill="#5e5230"/>
 <rect x="0" y="4" width="27.8" height="19" fill="#b8a24a"/>
 <rect x="26.2" y="4" width="1.6" height="19" fill="#8a7838"/>
</g>
<use href="#blogo" transform="translate(683,810.1) scale(0.97)"/>
<!-- tray -->
<rect x="1270.4" y="784.7" width="214.6" height="52.2" fill="#6b6b6b"/>
<rect x="1276.6" y="789" width="202.2" height="43.5" fill="#9a9a9a"/>
<g fill="#a5a05e" stroke="#5a5530" stroke-width="0.5">
 <polygon points="1292,805 1307,797 1307,824.4 1292,815.5"/>
 <rect x="1311" y="800" width="2.4" height="21.5"/>
 <rect x="1315.5" y="802.5" width="2.2" height="16.5"/>
 <rect x="1319.8" y="805.5" width="2" height="11"/>
</g>
<g fill="#a82020">
 <polygon points="1346.5,798 1355.5,798 1352.5,809.5 1349.5,809.5"/>
 <polygon points="1338,807.5 1347.5,807.5 1351,820 1354.5,807.5 1364.8,807.5 1355.5,824.4 1347.5,824.4"/>
</g>

<text transform="translate(60.36,28.70) scale(1.0011,1)" font-size="22.00" fill="#111" font-weight="normal">Toxic.blend</text>
<text transform="translate(216.62,28.70) scale(1.0014,1)" font-size="22.00" fill="#111" font-weight="normal">[X:\Desktop\My Projects\Toxic.blend] - Blender Yello 3.2.7</text>
<text transform="translate(58.35,70.40) scale(0.9530,1)" font-size="22.14" fill="#e8e8e8" font-weight="normal" stroke="#e8e8e8" stroke-width="0.315">File</text>
<text transform="translate(117.11,70.40) scale(0.9781,1)" font-size="22.14" fill="#e8e8e8" font-weight="normal" stroke="#e8e8e8" stroke-width="0.307">Edit</text>
<text transform="translate(179.34,70.40) scale(0.9606,1)" font-size="22.14" fill="#e8e8e8" font-weight="normal" stroke="#e8e8e8" stroke-width="0.312">Render</text>
<text transform="translate(275.70,70.40) scale(1.0414,1)" font-size="22.14" fill="#e8e8e8" font-weight="normal" stroke="#e8e8e8" stroke-width="0.288">Window</text>
<text transform="translate(383.03,70.40) scale(1.0230,1)" font-size="22.14" fill="#e8e8e8" font-weight="normal" stroke="#e8e8e8" stroke-width="0.293">Help</text>
<text transform="translate(462.32,70.40) scale(0.9298,1)" font-size="23.14" fill="#8a8a8a" font-weight="normal">Layout</text>
<text transform="translate(556.30,70.40) scale(0.9404,1)" font-size="23.14" fill="#8a8a8a" font-weight="normal">Modeling</text>
<text transform="translate(662.35,70.40) scale(0.8993,1)" font-size="23.14" fill="#8a8a8a" font-weight="normal">Sculpting</text>
<text transform="translate(765.23,70.40) scale(0.9443,1)" font-size="23.14" fill="#8a8a8a" font-weight="normal">UV Edit</text>
<text transform="translate(872.33,70.40) scale(1.0148,1)" font-size="23.14" fill="#8a8a8a" font-weight="normal">Texture</text>
<text transform="translate(981.08,70.40) scale(0.8539,1)" font-size="23.14" fill="#8a8a8a" font-weight="normal">Shading</text>
<text transform="translate(1107.80,70.40) scale(1.0164,1)" font-size="23.14" fill="#8a8a8a" font-weight="normal">AI</text>
<text transform="translate(1175.40,70.40) scale(0.9687,1)" font-size="22.57" fill="#f2f2f2" font-weight="normal" stroke="#f2f2f2" stroke-width="0.310">Animation</text>
<text transform="translate(1355.37,70.00) scale(0.8769,1)" font-size="15.71" fill="#c0c0c0" font-weight="normal">Scene.001</text>
<text transform="translate(452.56,99.80) scale(0.9931,1)" font-size="16.00" fill="#e0e0e0" font-weight="normal" stroke="#e0e0e0" stroke-width="0.302">Object Mode</text>
<text transform="translate(579.30,99.80) scale(0.9310,1)" font-size="16.00" fill="#e0e0e0" font-weight="normal" stroke="#e0e0e0" stroke-width="0.322">View</text>
<text transform="translate(629.55,99.80) scale(0.9041,1)" font-size="16.00" fill="#e0e0e0" font-weight="normal" stroke="#e0e0e0" stroke-width="0.332">Select</text>
<text transform="translate(688.50,99.80) scale(0.9721,1)" font-size="16.00" fill="#e0e0e0" font-weight="normal" stroke="#e0e0e0" stroke-width="0.309">Add</text>
<text transform="translate(729.04,99.80) scale(1.0143,1)" font-size="16.00" fill="#e0e0e0" font-weight="normal" stroke="#e0e0e0" stroke-width="0.296">Object</text>
<text transform="translate(892.57,99.20) scale(1.0886,1)" font-size="14.29" fill="#e0e0e0" font-weight="normal" stroke="#e0e0e0" stroke-width="0.276">Global</text>
<text transform="translate(1351.09,137.70) scale(0.9997,1)" font-size="13.57" fill="#e6e6e6" font-weight="normal" stroke="#e6e6e6" stroke-width="0.300">Transform</text>
<text transform="translate(1337.67,160.90) scale(0.9957,1)" font-size="10.71" fill="#e0e0e0" font-weight="normal" stroke="#e0e0e0" stroke-width="0.301">Location:</text>
<text transform="translate(1338.16,227.10) scale(1.0078,1)" font-size="10.71" fill="#e0e0e0" font-weight="normal" stroke="#e0e0e0" stroke-width="0.298">Rotation:</text>
<text transform="translate(1338.72,294.20) scale(0.8428,1)" font-size="10.71" fill="#e0e0e0" font-weight="normal" stroke="#e0e0e0" stroke-width="0.356">Scale:</text>
<text transform="translate(1346.85,179.00) scale(0.8600,1)" font-size="11.29" fill="#dcdcdc" font-weight="normal" stroke="#dcdcdc" stroke-width="0.349">X</text>
<text transform="translate(1405.84,179.00) scale(0.8600,1)" font-size="11.29" fill="#dcdcdc" font-weight="normal" stroke="#dcdcdc" stroke-width="0.349">91.616 m</text>
<text transform="translate(1346.85,193.70) scale(0.8600,1)" font-size="11.29" fill="#dcdcdc" font-weight="normal" stroke="#dcdcdc" stroke-width="0.349">Y</text>
<text transform="translate(1411.23,193.70) scale(0.8600,1)" font-size="11.29" fill="#dcdcdc" font-weight="normal" stroke="#dcdcdc" stroke-width="0.349">1.279 m</text>
<text transform="translate(1346.70,208.40) scale(0.8600,1)" font-size="11.29" fill="#dcdcdc" font-weight="normal" stroke="#dcdcdc" stroke-width="0.349">Z</text>
<text transform="translate(1411.23,208.40) scale(0.8600,1)" font-size="11.29" fill="#dcdcdc" font-weight="normal" stroke="#dcdcdc" stroke-width="0.349">1.188 m</text>
<text transform="translate(1346.85,246.60) scale(0.8600,1)" font-size="11.29" fill="#dcdcdc" font-weight="normal" stroke="#dcdcdc" stroke-width="0.349">X</text>
<text transform="translate(1433.04,246.60) scale(0.8600,1)" font-size="11.29" fill="#dcdcdc" font-weight="normal" stroke="#dcdcdc" stroke-width="0.349">0'</text>
<text transform="translate(1346.85,261.30) scale(0.8600,1)" font-size="11.29" fill="#dcdcdc" font-weight="normal" stroke="#dcdcdc" stroke-width="0.349">Y</text>
<text transform="translate(1433.04,261.30) scale(0.8600,1)" font-size="11.29" fill="#dcdcdc" font-weight="normal" stroke="#dcdcdc" stroke-width="0.349">0'</text>
<text transform="translate(1346.70,276.00) scale(0.8600,1)" font-size="11.29" fill="#dcdcdc" font-weight="normal" stroke="#dcdcdc" stroke-width="0.349">Z</text>
<text transform="translate(1433.04,276.00) scale(0.8600,1)" font-size="11.29" fill="#dcdcdc" font-weight="normal" stroke="#dcdcdc" stroke-width="0.349">0'</text>
<text transform="translate(1346.85,314.00) scale(0.8600,1)" font-size="11.29" fill="#dcdcdc" font-weight="normal" stroke="#dcdcdc" stroke-width="0.349">X</text>
<text transform="translate(1410.41,314.00) scale(0.8600,1)" font-size="11.29" fill="#dcdcdc" font-weight="normal" stroke="#dcdcdc" stroke-width="0.349">0.128</text>
<text transform="translate(1346.85,328.70) scale(0.8600,1)" font-size="11.29" fill="#dcdcdc" font-weight="normal" stroke="#dcdcdc" stroke-width="0.349">Y</text>
<text transform="translate(1410.41,328.70) scale(0.8600,1)" font-size="11.29" fill="#dcdcdc" font-weight="normal" stroke="#dcdcdc" stroke-width="0.349">0.018</text>
<text transform="translate(1346.70,343.40) scale(0.8600,1)" font-size="11.29" fill="#dcdcdc" font-weight="normal" stroke="#dcdcdc" stroke-width="0.349">Z</text>
<text transform="translate(1410.41,343.40) scale(0.8600,1)" font-size="11.29" fill="#dcdcdc" font-weight="normal" stroke="#dcdcdc" stroke-width="0.349">0.018</text>
<text transform="translate(8.58,658.00) scale(0.9576,1)" font-size="12.29" fill="#101010" font-weight="normal" stroke="#101010" stroke-width="0.418">Playback</text>
<text transform="translate(79.51,658.00) scale(1.0302,1)" font-size="12.29" fill="#101010" font-weight="normal" stroke="#101010" stroke-width="0.388">Keying</text>
<text transform="translate(148.00,658.30) scale(0.9613,1)" font-size="13.57" fill="#e6e6e6" font-weight="normal" stroke="#e6e6e6" stroke-width="0.312">View</text>
<text transform="translate(186.86,658.30) scale(0.9806,1)" font-size="13.57" fill="#e6e6e6" font-weight="normal" stroke="#e6e6e6" stroke-width="0.306">Marker</text>
<text transform="translate(1263.00,659.00) scale(0.9821,1)" font-size="13.14" fill="#e8e8e8" font-weight="normal" stroke="#e8e8e8" stroke-width="0.305">Start</text>
<text transform="translate(1330.52,659.00) scale(0.5877,1)" font-size="13.14" fill="#e8e8e8" font-weight="normal" stroke="#e8e8e8" stroke-width="0.510">1</text>
<text transform="translate(1366.47,659.00) scale(0.9066,1)" font-size="13.14" fill="#e8e8e8" font-weight="normal" stroke="#e8e8e8" stroke-width="0.331">End</text>
<text transform="translate(1422.42,659.00) scale(0.9330,1)" font-size="13.14" fill="#e8e8e8" font-weight="normal" stroke="#e8e8e8" stroke-width="0.322">3795</text>
<text transform="translate(30.59,681.60) scale(1.0043,1)" font-size="13.14" fill="#d2d2d2" font-weight="normal" stroke="#d2d2d2" stroke-width="0.299">0</text>
<text transform="translate(77.83,681.60) scale(0.8166,1)" font-size="13.14" fill="#d2d2d2" font-weight="normal" stroke="#d2d2d2" stroke-width="0.367">10</text>
<text transform="translate(132.41,681.60) scale(0.9506,1)" font-size="13.14" fill="#d2d2d2" font-weight="normal" stroke="#d2d2d2" stroke-width="0.316">20</text>
<text transform="translate(184.62,681.60) scale(0.9365,1)" font-size="13.14" fill="#d2d2d2" font-weight="normal" stroke="#d2d2d2" stroke-width="0.320">30</text>
<text transform="translate(240.81,681.60) scale(0.9229,1)" font-size="13.14" fill="#d2d2d2" font-weight="normal" stroke="#d2d2d2" stroke-width="0.325">40</text>
<text transform="translate(292.90,681.60) scale(0.9654,1)" font-size="13.14" fill="#d2d2d2" font-weight="normal" stroke="#d2d2d2" stroke-width="0.311">50</text>
<text transform="translate(345.10,681.60) scale(0.9725,1)" font-size="13.14" fill="#d2d2d2" font-weight="normal" stroke="#d2d2d2" stroke-width="0.308">60</text>
<text transform="translate(401.10,681.60) scale(0.9725,1)" font-size="13.14" fill="#d2d2d2" font-weight="normal" stroke="#d2d2d2" stroke-width="0.308">70</text>
<text transform="translate(453.61,681.60) scale(0.9582,1)" font-size="13.14" fill="#d2d2d2" font-weight="normal" stroke="#d2d2d2" stroke-width="0.313">80</text>
<text transform="translate(505.40,681.60) scale(0.9725,1)" font-size="13.14" fill="#d2d2d2" font-weight="normal" stroke="#d2d2d2" stroke-width="0.308">90</text>
<text transform="translate(562.55,681.60) scale(0.9144,1)" font-size="13.14" fill="#d2d2d2" font-weight="normal" stroke="#d2d2d2" stroke-width="0.328">100</text>
<text transform="translate(613.17,681.60) scale(1.0099,1)" font-size="13.14" fill="#d2d2d2" font-weight="normal" stroke="#d2d2d2" stroke-width="0.297">110</text>
<text transform="translate(665.98,681.60) scale(0.8807,1)" font-size="13.14" fill="#d2d2d2" font-weight="normal" stroke="#d2d2d2" stroke-width="0.341">120</text>
<text transform="translate(720.98,681.60) scale(0.8807,1)" font-size="13.14" fill="#d2d2d2" font-weight="normal" stroke="#d2d2d2" stroke-width="0.341">130</text>
<text transform="translate(776.22,681.60) scale(0.9480,1)" font-size="13.14" fill="#d2d2d2" font-weight="normal" stroke="#d2d2d2" stroke-width="0.316">140</text>
<text transform="translate(830.91,681.60) scale(0.9625,1)" font-size="13.14" fill="#d2d2d2" font-weight="normal" stroke="#d2d2d2" stroke-width="0.312">150</text>
<text transform="translate(886.93,681.60) scale(0.9432,1)" font-size="13.14" fill="#d2d2d2" font-weight="normal" stroke="#d2d2d2" stroke-width="0.318">160</text>
<text transform="translate(942.53,681.60) scale(0.9336,1)" font-size="13.14" fill="#d2d2d2" font-weight="normal" stroke="#d2d2d2" stroke-width="0.321">170</text>
<text transform="translate(993.52,681.60) scale(0.9480,1)" font-size="13.14" fill="#d2d2d2" font-weight="normal" stroke="#d2d2d2" stroke-width="0.316">180</text>
<text transform="translate(1045.22,681.60) scale(0.9480,1)" font-size="13.14" fill="#d2d2d2" font-weight="normal" stroke="#d2d2d2" stroke-width="0.316">190</text>
<text transform="translate(1099.41,681.60) scale(0.9531,1)" font-size="13.14" fill="#d2d2d2" font-weight="normal" stroke="#d2d2d2" stroke-width="0.315">200</text>
<text transform="translate(1155.44,681.60) scale(0.9054,1)" font-size="13.14" fill="#d2d2d2" font-weight="normal" stroke="#d2d2d2" stroke-width="0.331">210</text>
<text transform="translate(1210.40,681.60) scale(0.9721,1)" font-size="13.14" fill="#d2d2d2" font-weight="normal" stroke="#d2d2d2" stroke-width="0.309">220</text>
<text transform="translate(1261.80,681.60) scale(0.9817,1)" font-size="13.14" fill="#d2d2d2" font-weight="normal" stroke="#d2d2d2" stroke-width="0.306">230</text>
<text transform="translate(1317.00,681.60) scale(0.9721,1)" font-size="13.14" fill="#d2d2d2" font-weight="normal" stroke="#d2d2d2" stroke-width="0.309">240</text>
<text transform="translate(1369.01,681.60) scale(0.9531,1)" font-size="13.14" fill="#d2d2d2" font-weight="normal" stroke="#d2d2d2" stroke-width="0.315">250</text>
<text transform="translate(1424.00,681.60) scale(0.9721,1)" font-size="13.14" fill="#d2d2d2" font-weight="normal" stroke="#d2d2d2" stroke-width="0.309">260</text>
<text transform="translate(1475.40,681.60) scale(0.9721,1)" font-size="13.14" fill="#d2d2d2" font-weight="normal" stroke="#d2d2d2" stroke-width="0.309">270</text>
<text transform="translate(60.14,822.70) scale(1.1899,1)" font-size="30.00" fill="#000" font-weight="bold">Start</text>
<text transform="translate(238.24,818.00) scale(1.0289,1)" font-size="21.86" fill="#111" font-weight="normal">New folder (3)</text>
<text transform="translate(468.33,818.00) scale(0.9770,1)" font-size="21.86" fill="#111" font-weight="normal">My Projects</text>
<text transform="translate(706.66,818.00) scale(1.0020,1)" font-size="21.86" fill="#111" font-weight="normal">Toxic.blend</text>
<text transform="translate(1398.92,820.90) scale(0.9336,1)" font-size="26.57" fill="#000" font-weight="normal">00:08</text>
<text transform="translate(1483.10,131.05) rotate(90) scale(0.9068,1)" font-size="13.43" fill="#c8c8c8" font-weight="normal">Item</text>
<text transform="translate(1483.30,186.59) rotate(90) scale(0.9983,1)" font-size="13.43" fill="#9a9a9a" font-weight="normal">Tool</text>
<text transform="translate(1483.30,240.30) rotate(90) scale(0.8785,1)" font-size="13.43" fill="#9a9a9a" font-weight="normal">View</text>
<text transform="translate(1483.30,304.20) rotate(90) scale(0.9325,1)" font-size="13.43" fill="#9a9a9a" font-weight="normal">AI</text>
<text transform="translate(1483.30,341.69) rotate(90) scale(0.8676,1)" font-size="13.43" fill="#9a9a9a" font-weight="normal">Mixamo</text>
</svg>
</body></html>
